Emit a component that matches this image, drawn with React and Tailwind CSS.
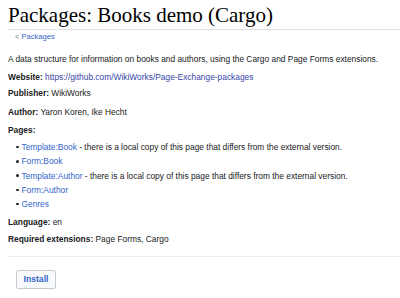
export default function App() {
  const sans = { fontFamily: '"Liberation Sans", Arial, sans-serif' };
  return (
    <div className="w-[400px] h-[298px] bg-white overflow-hidden text-[#202122]" style={sans}>
      <div className="pl-[8px]">
        <h1 className="pt-[2px] text-[21px] leading-[26px] text-[#000] border-b border-[#e0e0e0] pb-[1px]" style={{ fontFamily: '"Liberation Serif", "Times New Roman", serif' }}>
          Packages: Books demo (Cargo)
        </h1>
      </div>
      <div className="px-[8px] text-[8.4px] leading-[14px]">
        <div className="pl-[7px] text-[7.6px] text-[#3366cc]">
          <span className="text-[#72777d] mr-[2px]">&lt;</span>Packages
        </div>
        <p className="mt-[8px]">A data structure for information on books and authors, using the Cargo and Page Forms extensions.</p>
        <p className="mt-[4px]"><b>Website:</b> <span className="text-[#3645a8]">https://github.com/WikiWorks/Page-Exchange-packages</span></p>
        <p className="mt-[2px]"><b>Publisher:</b> WikiWorks</p>
        <p className="mt-[5px]"><b>Author:</b> Yaron Koren, Ike Hecht</p>
        <p className="mt-[4px]"><b>Pages:</b></p>
        <ul className="mt-[3px] pl-[8px] leading-[14.25px]">
          {[
            ["Template:Book", true],
            ["Form:Book", false],
            ["Template:Author", true],
            ["Form:Author", false],
            ["Genres", false],
          ].map(([t, d]) => (
            <li key={t} className="flex items-center">
              <span className="w-[2.5px] h-[2.5px] bg-[#202122] rounded-full mr-[3px]"></span>
              <span className="text-[#3366cc]">{t}</span>
              {d && <span>&nbsp;- there is a local copy of this page that differs from the external version.</span>}
            </li>
          ))}
        </ul>
        <p className="mt-[4px]"><b>Language:</b> en</p>
        <p className="mt-[3px]"><b>Required extensions:</b> Page Forms, Cargo</p>
      </div>
      <div className="mt-[10px] border-t border-[#eaecf0] ml-[8px]"></div>
      <div className="pl-[16px] pt-[8px]">
        <button className="w-[40px] h-[19px] border border-[#c8ccd1] bg-[#f8f9fa] rounded-[2px] text-[8.6px] font-bold text-[#3366cc]" style={sans}>
          Install
        </button>
      </div>
    </div>
  );
}
